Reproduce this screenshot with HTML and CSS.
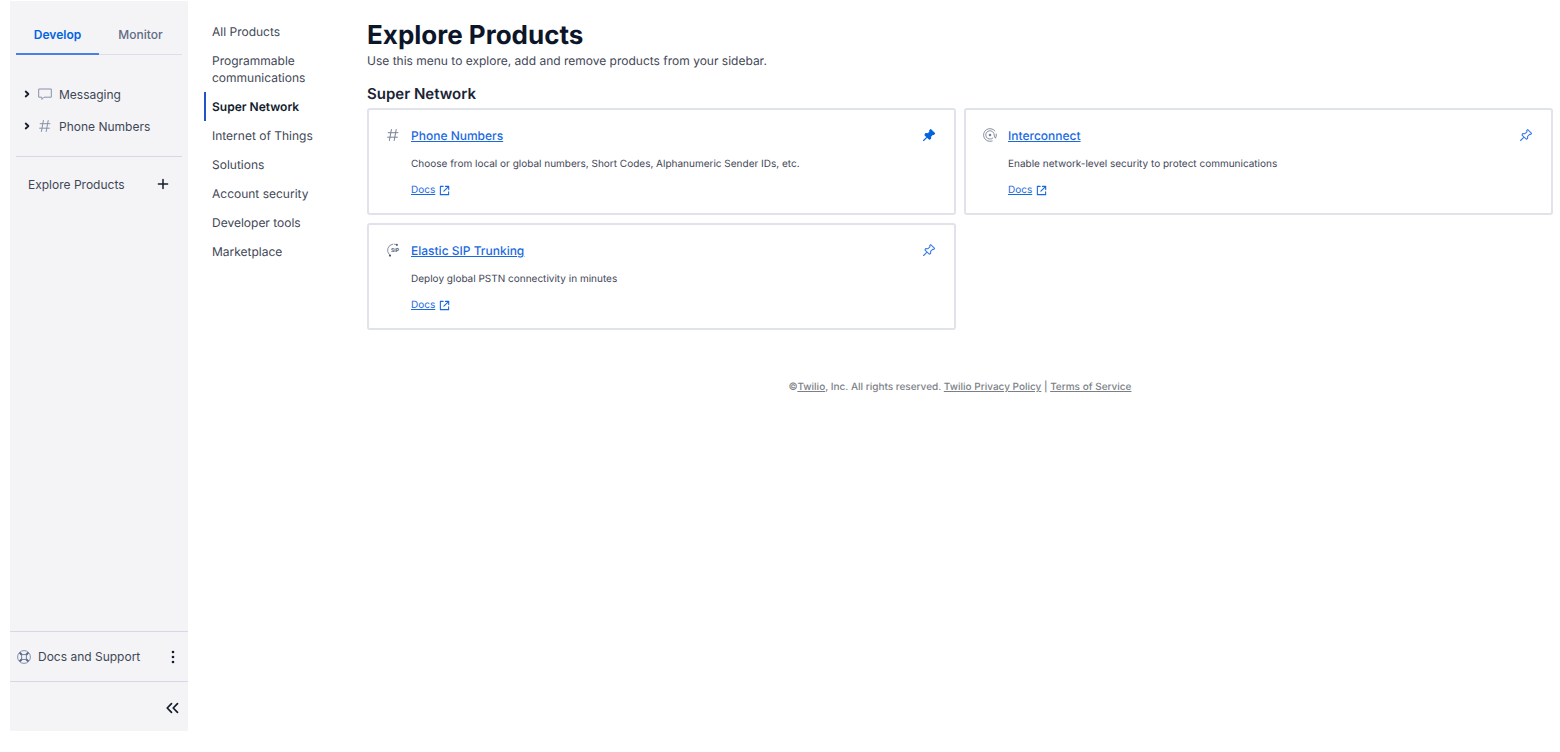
FILE: index.html
```html
<!DOCTYPE html>
<html lang="en">
<head>
<meta charset="utf-8">
<meta name="viewport" content="width=device-width, initial-scale=1">
<title>Explore Products</title>
<link rel="stylesheet" href="styles.css">
</head>
<body>
<svg class="defs" aria-hidden="true">
  <symbol id="hash" viewBox="0 0 14 14"><path d="M5.4 1.5 3.4 12.5M10.2 1.5l-2 11M2.2 4.7h9.8M1.6 9.2h9.8" fill="none" stroke="currentColor" stroke-linecap="round"/></symbol>
  <symbol id="caret" viewBox="0 0 8 8"><path d="M2.7 1.5 5.4 4 2.7 6.5" fill="none" stroke="currentColor" stroke-width="1.8" stroke-linecap="round" stroke-linejoin="round"/></symbol>
  <symbol id="external" viewBox="0 0 12 12"><path d="M4.5 1.5h-3v9h9v-3M7 1.5h3.6V5M10.4 1.7 5.3 6.8" fill="none" stroke="currentColor" stroke-width="1.2" stroke-linecap="round" stroke-linejoin="round"/></symbol>
  <symbol id="pin-shape" viewBox="0 0 14 14"><path d="M8.7 1.6 12.6 5.3 11.7 6.5 10.6 6.3 8.6 8.3 8.6 10.5 7.3 11.2 3 7.1 3.7 5.6 6 5.7 8 3.8 7.7 2.6ZM5 9.2 1.6 12.5" stroke="currentColor" stroke-width="1.1" stroke-linecap="round" stroke-linejoin="round"/></symbol>
</svg>

<aside class="sidebar">
  <div class="tabs" role="tablist">
    <button class="tab tab-active" role="tab" aria-selected="true">Develop</button>
    <button class="tab" role="tab" aria-selected="false">Monitor</button>
  </div>
  <ul class="pinned">
    <li><button class="pinned-item">
      <svg class="icon-caret"><use href="#caret"/></svg>
      <svg class="icon icon-muted" viewBox="0 0 14 14"><path d="M.7 2h12.6v8.2H6L3.9 12.4v-2.2H.7Z" fill="none" stroke="currentColor" stroke-linejoin="round"/></svg>
      Messaging</button></li>
    <li><button class="pinned-item">
      <svg class="icon-caret"><use href="#caret"/></svg>
      <svg class="icon icon-muted"><use href="#hash"/></svg>
      Phone Numbers</button></li>
  </ul>
  <button class="explore">Explore Products
    <svg class="icon icon-dark" viewBox="0 0 14 14"><path d="M7 2.4v9.2M2.4 7h9.2" fill="none" stroke="currentColor" stroke-width="1.5" stroke-linecap="round"/></svg>
  </button>
  <div class="support">
    <button class="support-link">
      <svg class="icon icon-slate" viewBox="0 0 14 14"><g fill="none" stroke="currentColor"><circle cx="7" cy="7" r="6.4" stroke-width=".7"/><path d="M5 4.6h4M5 9.4h4M4.6 5v4M9.4 5v4" stroke-width=".8"/><path d="M4.8 4.8 2.6 2.6M9.2 4.8l2.2-2.2M4.8 9.2l-2.2 2.2M9.2 9.2l2.2 2.2" stroke-width="2"/></g></svg>
      Docs and Support</button>
    <button class="icon-button" aria-label="More options">
      <svg class="icon" viewBox="0 0 14 14" fill="currentColor"><circle cx="7" cy="2" r="1.3"/><circle cx="7" cy="7" r="1.3"/><circle cx="7" cy="12" r="1.3"/></svg>
    </button>
  </div>
  <div class="collapse">
    <button class="icon-button" aria-label="Collapse sidebar">
      <svg class="icon" viewBox="0 0 14 14"><path d="M5.5 2.6 1.2 7 5.5 11.4M11.5 2.6 7.2 7 11.5 11.4" fill="none" stroke="currentColor" stroke-width="1.7" stroke-linecap="round" stroke-linejoin="round"/></svg>
    </button>
  </div>
</aside>

<nav class="categories" aria-label="Product categories">
  <a href="#">All Products</a>
  <a href="#">Programmable communications</a>
  <a href="#" class="current" aria-current="page">Super Network</a>
  <a href="#">Internet of Things</a>
  <a href="#">Solutions</a>
  <a href="#">Account security</a>
  <a href="#">Developer tools</a>
  <a href="#">Marketplace</a>
</nav>

<main class="content">
  <h1>Explore Products</h1>
  <p class="intro">Use this menu to explore, add and remove products from your sidebar.</p>
  <h2>Super Network</h2>
  <div class="cards">
    <article class="card">
      <svg class="icon icon-gray"><use href="#hash"/></svg>
      <div class="card-body">
        <h3><a href="#">Phone Numbers</a></h3>
        <p>Choose from local or global numbers, Short Codes, Alphanumeric Sender IDs, etc.</p>
        <a class="docs" href="#"><span>Docs</span><svg class="icon-external"><use href="#external"/></svg></a>
      </div>
      <button class="pin pin-filled" aria-label="Unpin Phone Numbers"><svg class="icon"><use href="#pin-shape"/></svg></button>
    </article>
    <article class="card">
      <svg class="icon icon-gray" viewBox="0 0 14 14"><g fill="none" stroke="currentColor" stroke-width=".9" stroke-linecap="round"><path d="M11.9 2.9A6.4 6.4 0 1 0 9.2 13M13.3 6A6.4 6.4 0 0 1 12.6 10"/><path d="M9.9 10A4.2 4.2 0 1 1 11.2 7Q11.2 9.2 12.4 10"/></g><circle cx="7" cy="7" r="1.3" fill="currentColor"/></svg>
      <div class="card-body">
        <h3><a href="#">Interconnect</a></h3>
        <p>Enable network-level security to protect communications</p>
        <a class="docs" href="#"><span>Docs</span><svg class="icon-external"><use href="#external"/></svg></a>
      </div>
      <button class="pin" aria-label="Pin Interconnect"><svg class="icon"><use href="#pin-shape"/></svg></button>
    </article>
    <article class="card">
      <svg class="icon icon-gray" viewBox="0 0 14 14"><path d="M3.2 11.4A6.2 6.2 0 0 1 6.8 1.1M8.3 1.1q1.7.2 2.8 1.3" fill="none" stroke="currentColor" stroke-width=".9" stroke-linecap="round"/><circle cx="10.9" cy="1.7" r="1" fill="#4b5671"/><circle cx="4" cy="12.6" r="1.1" fill="#4b5671"/><text x="5" y="9" class="sip">SIP</text></svg>
      <div class="card-body">
        <h3><a href="#">Elastic SIP Trunking</a></h3>
        <p>Deploy global PSTN connectivity in minutes</p>
        <a class="docs" href="#"><span>Docs</span><svg class="icon-external"><use href="#external"/></svg></a>
      </div>
      <button class="pin" aria-label="Pin Elastic SIP Trunking"><svg class="icon"><use href="#pin-shape"/></svg></button>
    </article>
  </div>
  <footer class="footer">©<a href="#">Twilio</a>, Inc. All rights reserved. <a href="#">Twilio Privacy Policy</a> | <a href="#">Terms of Service</a></footer>
</main>
</body>
</html>
```

FILE: styles.css
```css
* { box-sizing: border-box; }

body {
  display: flex;
  min-height: 100vh;
  margin: 0;
  padding: 1px 7px 21px 10px;
  background: #fff;
  color: #3f4757;
  font: 12px/17px Inter, "Liberation Sans", sans-serif;
  text-rendering: geometricPrecision;
}

h1, h2, h3, p, ul { margin: 0; padding: 0; }
ul { list-style: none; }

button {
  padding: 0;
  border: 0;
  background: none;
  color: inherit;
  font: inherit;
  cursor: pointer;
}

.defs { position: absolute; width: 0; height: 0; }
.icon { flex: none; display: block; width: 14px; height: 14px; }
.icon-caret { flex: none; width: 8px; height: 8px; color: #121c2d; }
.icon-muted { color: #8891aa; }
.icon-gray { color: #7b8296; }
.icon-slate { color: #56648a; }
.icon-dark { color: #121c2d; }

.sidebar {
  flex: none;
  display: flex;
  flex-direction: column;
  width: 178px;
  background: #f4f4f6;
}

.tabs {
  display: flex;
  margin: 14px 6px 0;
  border-bottom: 1px solid #dcdfe9;
}
.tab {
  flex: 1;
  height: 40px;
  margin-bottom: -1px;
  border-bottom: 2px solid transparent;
  color: #606b85;
  font-weight: 500;
}
.tab-active { border-bottom-color: #4a7fe8; color: #0263e0; font-weight: 600; }

.pinned {
  margin: 0 6px;
  padding: 23px 0 14px;
  border-bottom: 1px solid #d5d9e6;
}
.pinned-item {
  display: flex;
  align-items: center;
  gap: 7px;
  width: 100%;
  height: 32px;
  padding-left: 7px;
}

.explore {
  display: flex;
  align-items: center;
  justify-content: space-between;
  height: 54px;
  padding: 0 18px;
}

.support, .collapse {
  display: flex;
  align-items: center;
  height: 50px;
  padding: 0 8px 0 7px;
  border-top: 1px solid #d5d9e6;
}
.support { justify-content: space-between; margin-top: auto; }
.support-link { display: flex; align-items: center; gap: 7px; }
.collapse { justify-content: flex-end; padding-top: 2px; }
.icon-button { color: #121c2d; }

.categories {
  flex: none;
  width: 146px;
  margin-left: 16px;
  padding-top: 16px;
}
.categories a {
  display: block;
  padding: 6px 30px 6px 6px;
  border-left: 2px solid transparent;
  color: inherit;
  text-decoration: none;
}
.categories .current { border-left-color: #2453c9; color: #121c2d; font-weight: 600; }

.content { flex: 1; min-width: 0; margin-left: 17px; padding-top: 18px; }

h1 { color: #0d1628; font-size: 26px; line-height: 33px; font-weight: 700; }
h2 { margin: 14px 0 4px; color: #1b2435; font-size: 15px; line-height: 20px; font-weight: 600; }
.intro { line-height: 18px; }

.cards { display: grid; grid-template-columns: 1fr 1fr; gap: 8px; }
.card {
  display: flex;
  align-items: flex-start;
  padding: 18px 18px 16px 17px;
  border: 2px solid #e1e3ea;
  border-radius: 3px;
}
.card-body { flex: 1; min-width: 0; margin-left: 11px; }
.card h3 { font-size: 12px; line-height: 16px; font-weight: 500; }
.card p { margin: 13px 0 12px; font-size: 10px; line-height: 14px; }
.card a { color: #1a69e0; text-underline-offset: 1px; }
.card .docs {
  display: flex;
  align-items: center;
  gap: 4px;
  font-size: 10px;
  line-height: 14px;
  text-decoration: none;
}
.docs span { text-decoration: underline; }
.icon-external { width: 11px; height: 11px; }
.pin { color: #3d7be6; fill: none; }
.pin-filled { color: #0263e0; fill: currentColor; }
.sip { fill: #4b5671; font-size: 5px; font-weight: 700; }

.footer {
  margin-top: 48px;
  color: #7b7f86;
  font-size: 10px;
  line-height: 18px;
  font-weight: 500;
  text-align: center;
}
.footer a { color: inherit; }
```
